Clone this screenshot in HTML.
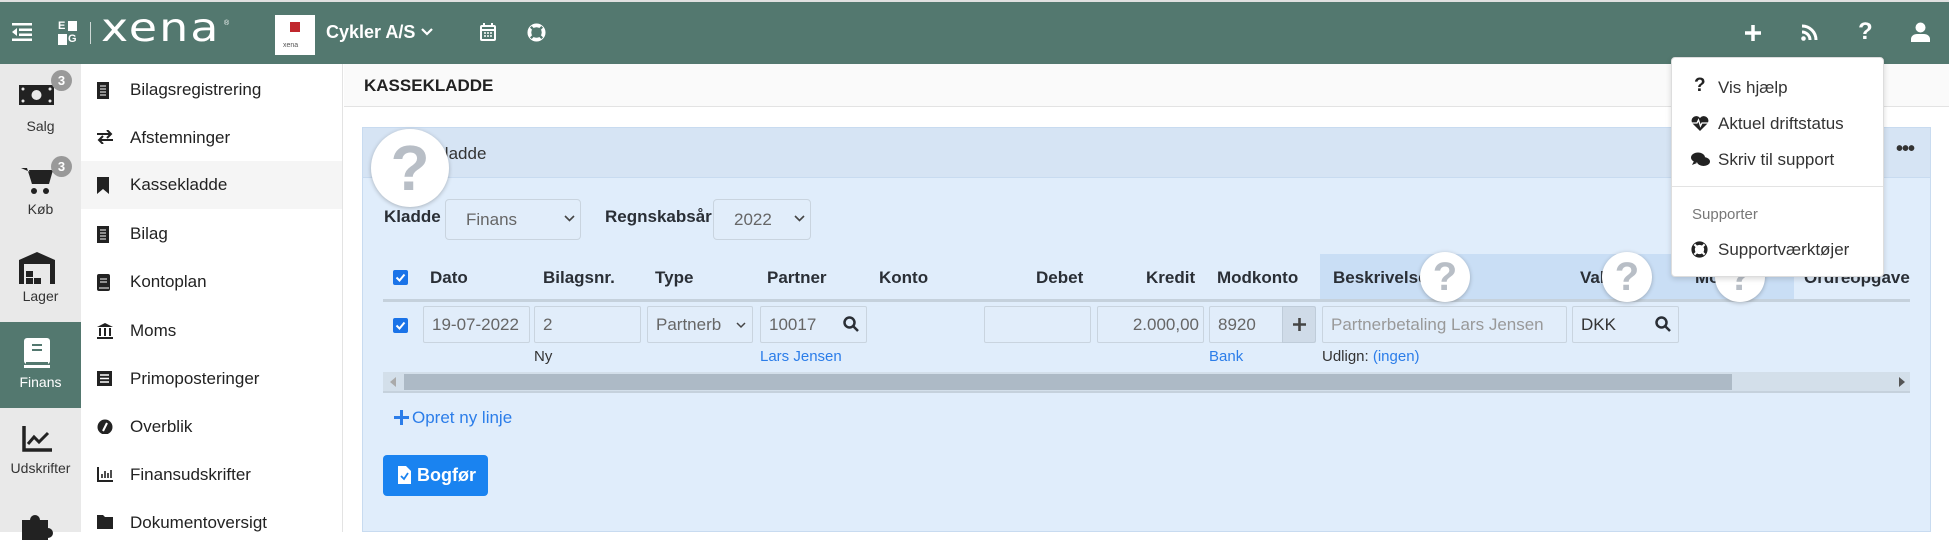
<!DOCTYPE html>
<html><head><meta charset="utf-8"><style>
*{box-sizing:border-box;margin:0;padding:0}
body{width:1949px;height:532px;overflow:hidden;font-family:"Liberation Sans",sans-serif;background:#fff;position:relative;color:#212529}
.a{position:absolute}
.hdr{left:0;top:2px;width:1949px;height:62px;background:#53786f}
.topline{left:0;top:0;width:1949px;height:2px;background:#e0e0e0}
.lb{left:0;top:64px;width:81px;height:468px;background:#e9e9e9}
.lbl{position:absolute;width:81px;text-align:center;font-size:14px;color:#333}
.badge{position:absolute;width:21px;height:21px;border-radius:50%;background:#999;color:#fff;font-size:13px;font-weight:bold;text-align:center;line-height:21px}
.sub{left:81px;top:64px;width:262px;height:468px;background:#fff;border-right:1px solid #e3e3e3}
.ni{position:absolute;left:0;width:261px;height:48px;font-size:17px;color:#222;line-height:48px;padding-left:49px}
.ni svg{position:absolute;left:16px;top:16px}
.in{position:absolute;height:37px;background:#e1edfa;border:1px solid #c9d4df;font-size:17px;color:#666;line-height:35px;padding-left:8px;border-radius:2px}
.th{position:absolute;top:268px;font-size:17px;font-weight:bold;color:#2a2f36}
.q{position:absolute;border-radius:50%;background:#fff;box-shadow:0 1px 4px rgba(0,0,0,.25);color:#b8bec6;font-weight:bold;text-align:center}
.dd{font-size:17px;color:#333;position:absolute;left:46px}
</style></head><body>
<div class="a topline"></div>
<div class="a hdr">
 <svg class="a" style="left:12px;top:20px" width="20" height="20" viewBox="0 0 20 20" fill="#fff"><rect x="0" y="1" width="20" height="2.5"/><rect x="7" y="6.5" width="13" height="2.5"/><rect x="7" y="11.5" width="13" height="2.5"/><rect x="0" y="16.5" width="20" height="2.5"/><path d="M0 10l5-4v8z"/></svg>
 <div class="a" style="left:58px;top:19px;width:19px;height:24px">
  <div class="a" style="left:0;top:0;font-size:11px;color:#fff;font-weight:bold;line-height:11px">E</div><div class="a" style="left:10px;top:0;width:9px;height:10px;background:#fff"></div>
  <div class="a" style="left:0;top:13px;width:9px;height:11px;background:#fff"></div><div class="a" style="left:10px;top:13px;font-size:11px;color:#fff;font-weight:bold;line-height:11px">G</div>
 </div>
 <div class="a" style="left:90px;top:20px;width:1px;height:22px;background:#cfd9d6"></div>
 <div class="a" style="left:101px;top:6px;font-size:46px;color:#fff;letter-spacing:2px;line-height:46px;font-family:'DejaVu Sans',sans-serif;transform:scaleY(0.85);transform-origin:top left">xena</div>
 <div class="a" style="left:224px;top:18px;font-size:7px;color:#fff">®</div>
 <div class="a" style="left:275px;top:13px;width:40px;height:40px;background:#fff">
  <div class="a" style="left:15px;top:7px;width:10px;height:10px;background:#c0272d"></div>
  <div class="a" style="left:8px;top:27px;font-size:7px;color:#555">xena</div>
 </div>
 <div class="a" style="left:326px;top:20px;font-size:18px;font-weight:bold;color:#fff">Cykler A/S</div>
 <svg class="a" style="left:421px;top:25px" width="12" height="10" viewBox="0 0 12 10"><path d="M1 2l5 5 5-5" stroke="#fff" stroke-width="2.2" fill="none"/></svg>
 <svg class="a" style="left:480px;top:20px" width="16" height="20" viewBox="0 0 16 20" fill="none" stroke="#fff" stroke-width="2"><rect x="1" y="4" width="14" height="14" rx="1"/><path d="M4 1v4M12 1v4M1 8h14"/><path d="M4 11h2M7 11h2M10 11h2M4 14h2M7 14h2M10 14h2" stroke-width="1.6"/></svg>
 <svg class="a" style="left:527px;top:21px" width="19" height="19" viewBox="0 0 20 20"><circle cx="10" cy="10" r="7.5" fill="none" stroke="#fff" stroke-width="4"/><path d="M4 4l3 3M16 4l-3 3M4 16l3-3M16 16l-3-3" stroke="#53786f" stroke-width="2.5"/></svg>
 <svg class="a" style="left:1744px;top:22px" width="18" height="18" viewBox="0 0 18 18"><path d="M9 1v16M1 9h16" stroke="#fff" stroke-width="3.5"/></svg>
 <svg class="a" style="left:1800px;top:21px" width="19" height="19" viewBox="0 0 19 19" fill="none" stroke="#fff" stroke-width="3"><path d="M2 9a8 8 0 0 1 8 8"/><path d="M2 3a14 14 0 0 1 14 14"/><circle cx="3.5" cy="15.5" r="2.3" fill="#fff" stroke="none"/></svg>
 <div class="a" style="left:1858px;top:16px;font-size:24px;font-weight:bold;color:#fff">?</div>
 <svg class="a" style="left:1911px;top:20px" width="19" height="20" viewBox="0 0 19 20" fill="#fff"><circle cx="9.5" cy="5.5" r="5"/><path d="M0 20v-3c0-3 3-5 6-5h7c3 0 6 2 6 5v3z"/></svg>
</div>

<div class="a lb">
 <div class="a" style="left:0;top:258px;width:81px;height:86px;background:#53786f"></div>
 <svg class="a" style="left:19px;top:21px" width="35" height="20" viewBox="0 0 35 20"><rect width="35" height="20" fill="#222"/><circle cx="17.5" cy="10" r="5" fill="#e9e9e9"/><circle cx="4" cy="4" r="1.5" fill="#e9e9e9"/><circle cx="31" cy="16" r="1.5" fill="#e9e9e9"/><circle cx="4" cy="16" r="1.5" fill="#e9e9e9"/><circle cx="31" cy="4" r="1.5" fill="#e9e9e9"/></svg>
 <div class="badge" style="left:51px;top:6px">3</div>
 <div class="lbl" style="top:54px">Salg</div>
 <svg class="a" style="left:21px;top:102px" width="32" height="30" viewBox="0 0 32 30" fill="#222"><path d="M0 2h6l5 16h16l4-12H9" /><path d="M8 4h24l-4 14H11z"/><circle cx="13" cy="25" r="3"/><circle cx="25" cy="25" r="3"/></svg>
 <div class="badge" style="left:51px;top:92px">3</div>
 <div class="lbl" style="top:137px">Køb</div>
 <svg class="a" style="left:19px;top:188px" width="36" height="32" viewBox="0 0 36 32"><path d="M0 8L18 0l18 8v24H0z" fill="#222"/><rect x="5" y="12" width="26" height="20" fill="#e9e9e9"/><rect x="7" y="19" width="7" height="6" fill="#222"/><rect x="7" y="26" width="7" height="6" fill="#222"/><rect x="15" y="26" width="7" height="6" fill="#222"/></svg>
 <div class="lbl" style="top:224px">Lager</div>
 <svg class="a" style="left:24px;top:272px" width="26" height="32" viewBox="0 0 26 32"><rect x="0" y="2" width="26" height="26" rx="3" fill="#fff"/><path d="M8 9h10M8 14h10" stroke="#53786f" stroke-width="2"/><rect x="2" y="26" width="22" height="3" fill="#53786f"/><rect x="0" y="29" width="26" height="3" fill="#fff"/></svg>
 <div class="lbl" style="top:310px;color:#fff">Finans</div>
 <svg class="a" style="left:22px;top:362px" width="30" height="26" viewBox="0 0 30 26" fill="none" stroke="#222" stroke-width="3.5"><path d="M2 0v24h28"/><path d="M6 18l6-7 5 5 9-9" stroke-width="3"/></svg>
 <div class="lbl" style="top:396px">Udskrifter</div>
 <svg class="a" style="left:20px;top:446px" width="34" height="30" viewBox="0 0 34 30" fill="#222"><path d="M2 10h8a5 5 0 1 1 10 0h8v8a5 5 0 1 1 0 10v2H2z"/></svg>
</div>

<div class="a sub">
 <div class="a" style="left:0;top:97px;width:261px;height:48px;background:#f5f5f5"></div>
 <div class="ni" style="top:2px"><svg width="12" height="17" viewBox="0 0 12 17"><rect width="12" height="17" fill="#222"/><path d="M3 4h6M3 7h6M3 10h6M3 13h6" stroke="#fff"/></svg>Bilagsregistrering</div>
 <div class="ni" style="top:50px"><svg width="16" height="14" viewBox="0 0 16 14" fill="none" stroke="#222" stroke-width="2"><path d="M0 4h14M10 0l4 4-4 4M16 10H2M6 6l-4 4 4 4"/></svg>Afstemninger</div>
 <div class="ni" style="top:97px"><svg width="12" height="17" viewBox="0 0 12 17"><path d="M0 0h12v17l-6-5-6 5z" fill="#222"/></svg>Kassekladde</div>
 <div class="ni" style="top:146px"><svg width="12" height="17" viewBox="0 0 12 17"><rect width="12" height="17" fill="#222"/><path d="M3 4h6M3 7h6M3 10h6M3 13h6" stroke="#fff"/></svg>Bilag</div>
 <div class="ni" style="top:194px"><svg width="13" height="17" viewBox="0 0 13 17"><rect width="13" height="17" rx="2" fill="#222"/><path d="M3 5h7M3 8h7M2 14h10" stroke="#fff"/></svg>Kontoplan</div>
 <div class="ni" style="top:243px"><svg width="16" height="16" viewBox="0 0 16 16" fill="#222"><path d="M0 4L8 0l8 4zM0 14h16v2H0zM2 5h2v8H2zM7 5h2v8H7zM12 5h2v8h-2z"/></svg>Moms</div>
 <div class="ni" style="top:291px"><svg width="15" height="15" viewBox="0 0 15 15"><rect width="15" height="15" fill="#222"/><path d="M3 4h9M3 7.5h9M3 11h9" stroke="#fff" stroke-width="1.5"/></svg>Primoposteringer</div>
 <div class="ni" style="top:339px"><svg width="16" height="15" viewBox="0 0 16 15"><circle cx="8" cy="8" r="7.5" fill="#222"/><path d="M6 12l4-8" stroke="#fff" stroke-width="2"/></svg>Overblik</div>
 <div class="ni" style="top:387px"><svg width="16" height="15" viewBox="0 0 16 15" fill="none" stroke="#222" stroke-width="2"><path d="M1 0v14h15"/><path d="M5 11V7M8 11V4M11 11V6M14 11V3" stroke-width="1.6"/></svg>Finansudskrifter</div>
 <div class="ni" style="top:435px"><svg width="16" height="14" viewBox="0 0 16 14"><path d="M0 0h6l2 2h8v12H0z" fill="#222"/></svg>Dokumentoversigt</div>
</div>

<div class="a" style="left:344px;top:64px;width:1605px;height:43px;background:#fafafa;border-bottom:1px solid #e3e3e3"></div>
<div class="a" style="left:364px;top:76px;font-size:17px;font-weight:bold;color:#222">KASSEKLADDE</div>

<div class="a" style="left:362px;top:127px;width:1569px;height:405px;background:#e0edfb;border:1px solid #c8dbf0"></div>
<div class="a" style="left:363px;top:128px;width:1567px;height:50px;background:#d6e4f4;border-bottom:1px solid #c8dbf0"></div>
<div class="a" style="left:390px;top:144px;font-size:17px;color:#333">Bilagskladde</div>
<div class="a" style="left:1896px;top:138px;font-size:20px;font-weight:bold;color:#333;letter-spacing:-1px">•••</div>

<div class="a" style="left:384px;top:207px;font-size:17px;font-weight:bold;color:#2a2f36">Kladde</div>
<div class="in" style="left:445px;top:199px;width:136px;height:41px;line-height:39px;padding-left:20px;border-radius:4px">Finans</div>
<svg class="a" style="left:564px;top:215px" width="11" height="8" viewBox="0 0 11 8"><path d="M1 1l4.5 4.5L10 1" stroke="#444" stroke-width="1.6" fill="none"/></svg>
<div class="a" style="left:605px;top:207px;font-size:17px;font-weight:bold;color:#2a2f36">Regnskabsår</div>
<div class="in" style="left:713px;top:199px;width:98px;height:41px;line-height:39px;padding-left:20px;border-radius:4px">2022</div>
<svg class="a" style="left:794px;top:215px" width="11" height="8" viewBox="0 0 11 8"><path d="M1 1l4.5 4.5L10 1" stroke="#444" stroke-width="1.6" fill="none"/></svg>

<div class="a" style="left:1320px;top:254px;width:474px;height:47px;background:#c9def5"></div>
<div class="a" style="left:393px;top:270px;width:15px;height:15px;background:#1a73e8;border-radius:2px"></div>
<svg class="a" style="left:395px;top:272px" width="11" height="11" viewBox="0 0 11 11"><path d="M1.5 5.5l3 3 5-6" stroke="#fff" stroke-width="2" fill="none"/></svg>
<div class="th" style="left:430px">Dato</div>
<div class="th" style="left:543px">Bilagsnr.</div>
<div class="th" style="left:655px">Type</div>
<div class="th" style="left:767px">Partner</div>
<div class="th" style="left:879px">Konto</div>
<div class="th" style="left:1036px">Debet</div>
<div class="th" style="left:1146px">Kredit</div>
<div class="th" style="left:1217px">Modkonto</div>
<div class="th" style="left:1333px">Beskrivelse</div>
<div class="th" style="left:1580px">Valuta</div>
<div class="th" style="left:1695px">Moms</div>
<div class="th" style="left:1804px;width:106px;overflow:hidden;white-space:nowrap">Ordreopgave</div>
<div class="a" style="left:383px;top:299px;width:1527px;height:3px;background:#c5d1dc"></div>

<div class="a" style="left:393px;top:318px;width:15px;height:15px;background:#1a73e8;border-radius:2px"></div>
<svg class="a" style="left:395px;top:320px" width="11" height="11" viewBox="0 0 11 11"><path d="M1.5 5.5l3 3 5-6" stroke="#fff" stroke-width="2" fill="none"/></svg>
<div class="in" style="left:423px;top:306px;width:107px">19-07-2022</div>
<div class="in" style="left:534px;top:306px;width:107px">2</div>
<div class="in" style="left:647px;top:306px;width:106px">Partnerb</div>
<svg class="a" style="left:736px;top:322px" width="10" height="7" viewBox="0 0 10 7"><path d="M1 1l4 4 4-4" stroke="#444" stroke-width="1.5" fill="none"/></svg>
<div class="in" style="left:760px;top:306px;width:107px">10017</div>
<svg class="a" style="left:843px;top:316px" width="16" height="16" viewBox="0 0 16 16" fill="none" stroke="#2a2f36" stroke-width="2.5"><circle cx="6.5" cy="6.5" r="5"/><path d="M10 10l5 5"/></svg>
<div class="in" style="left:984px;top:306px;width:107px"></div>
<div class="in" style="left:1097px;top:306px;width:107px;text-align:right;padding-right:4px">2.000,00</div>
<div class="in" style="left:1209px;top:306px;width:107px">8920</div>
<div class="a" style="left:1282px;top:306px;width:34px;height:37px;background:#cfdbe8;border:1px solid #bfccd9;border-radius:0 3px 3px 0"></div>
<svg class="a" style="left:1292px;top:317px" width="15" height="15" viewBox="0 0 15 15"><path d="M7.5 1v13M1 7.5h13" stroke="#444" stroke-width="2.6"/></svg>
<div class="in" style="left:1322px;top:306px;width:245px;color:#999">Partnerbetaling Lars Jensen</div>
<div class="in" style="left:1572px;top:306px;width:107px;color:#333">DKK</div>
<svg class="a" style="left:1655px;top:316px" width="16" height="16" viewBox="0 0 16 16" fill="none" stroke="#2a2f36" stroke-width="2.5"><circle cx="6.5" cy="6.5" r="5"/><path d="M10 10l5 5"/></svg>

<div class="a" style="left:534px;top:348px;font-size:15px;color:#333">Ny</div>
<div class="a" style="left:760px;top:348px;font-size:15px;color:#2b7de9">Lars Jensen</div>
<div class="a" style="left:1209px;top:348px;font-size:15px;color:#2b7de9">Bank</div>
<div class="a" style="left:1322px;top:348px;font-size:15px;color:#333">Udlign: <span style="color:#2b7de9">(ingen)</span></div>

<div class="a" style="left:383px;top:372px;width:1527px;height:19px;background:#d3dfea"></div>
<div class="a" style="left:404px;top:374px;width:1328px;height:16px;background:#adbac6"></div>
<svg class="a" style="left:390px;top:377px" width="6" height="10" viewBox="0 0 6 10"><path d="M6 0v10L0 5z" fill="#aaa"/></svg>
<svg class="a" style="left:1899px;top:377px" width="6" height="10" viewBox="0 0 6 10"><path d="M0 0v10l6-5z" fill="#555"/></svg>
<div class="a" style="left:383px;top:391px;width:1527px;height:2px;background:#c5d1dc"></div>

<svg class="a" style="left:394px;top:410px" width="15" height="15" viewBox="0 0 15 15"><path d="M7.5 0v15M0 7.5h15" stroke="#2b7de9" stroke-width="3"/></svg>
<div class="a" style="left:412px;top:408px;font-size:17px;color:#2b7de9">Opret ny linje</div>
<div class="a" style="left:383px;top:455px;width:105px;height:41px;background:#1a83f0;border-radius:4px;color:#fff;font-size:18px;font-weight:bold;line-height:41px;padding-left:34px">Bogfør</div>
<svg class="a" style="left:398px;top:466px" width="13" height="18" viewBox="0 0 13 18"><path d="M0 0h8l5 5v13H0z" fill="#fff"/><path d="M3 10l3 3 4-6" stroke="#1a83f0" stroke-width="1.8" fill="none"/></svg>

<div class="q" style="left:371px;top:129px;width:78px;height:78px;font-size:64px;line-height:78px">?</div>
<div class="q" style="left:1420px;top:252px;width:50px;height:50px;font-size:40px;line-height:50px">?</div>
<div class="q" style="left:1602px;top:252px;width:50px;height:50px;font-size:40px;line-height:50px">?</div>
<div class="q" style="left:1715px;top:252px;width:50px;height:50px;font-size:40px;line-height:50px">?</div>

<div class="a" style="left:1671px;top:57px;width:213px;height:220px;background:#fff;border:1px solid #ddd;border-radius:4px;box-shadow:0 2px 6px rgba(0,0,0,.15)">
 <div class="a" style="left:22px;top:17px;font-size:19px;font-weight:bold;color:#222">?</div><div class="dd" style="top:20px">Vis hjælp</div>
 <svg class="a" style="left:19px;top:58px" width="18" height="15" viewBox="0 0 18 15"><path d="M9 15L1.5 7.5A4.3 4.3 0 0 1 9 2a4.3 4.3 0 0 1 7.5 5.5z" fill="#222"/><path d="M1 7h5l1.5-3 2 6 1.5-3h6" stroke="#fff" stroke-width="1.3" fill="none"/></svg><div class="dd" style="top:56px">Aktuel driftstatus</div>
 <svg class="a" style="left:19px;top:94px" width="19" height="15" viewBox="0 0 19 15" fill="#222"><ellipse cx="7" cy="5.5" rx="7" ry="5"/><ellipse cx="12.5" cy="9.5" rx="6.5" ry="4.5"/><path d="M3 9l-2 4 5-2z"/></svg><div class="dd" style="top:92px">Skriv til support</div>
 <div class="a" style="left:0;top:128px;width:211px;height:1px;background:#e3e3e3"></div>
 <div class="a" style="left:20px;top:148px;font-size:15px;color:#777">Supporter</div>
 <svg class="a" style="left:19px;top:183px" width="17" height="17" viewBox="0 0 20 20"><circle cx="10" cy="10" r="7.5" fill="none" stroke="#222" stroke-width="4"/><path d="M4 4l3 3M16 4l-3 3M4 16l3-3M16 16l-3-3" stroke="#fff" stroke-width="2.5"/></svg><div class="dd" style="top:182px">Supportværktøjer</div>
</div>
</body></html>
